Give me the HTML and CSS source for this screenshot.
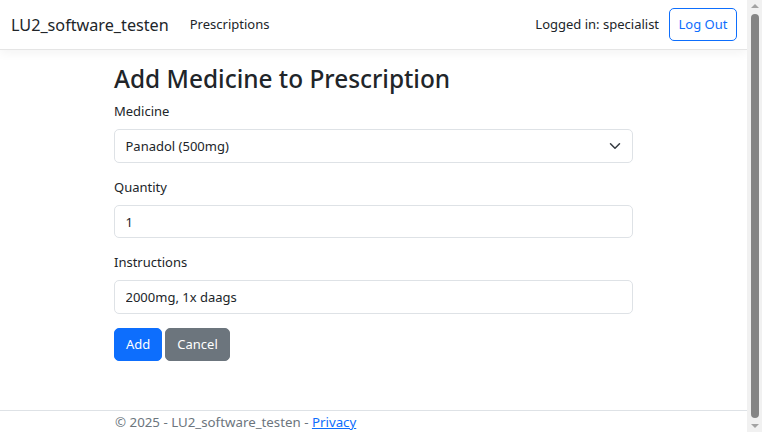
FILE: index.html
```html
<!DOCTYPE html>
<html lang="en">
<head>
<meta charset="utf-8">
<title>Add Medicine - LU2_software_testen</title>
<link rel="stylesheet" href="styles.css">
</head>
<body>
<div class="page">
  <header class="navbar">
    <a class="brand" href="#">LU2_software_testen</a>
    <nav class="nav-main">
      <a class="nav-link" href="#">Prescriptions</a>
    </nav>
    <div class="nav-user">
      <span class="user-text">Logged in: specialist</span>
      <button class="btn btn-outline" type="button">Log Out</button>
    </div>
  </header>

  <main class="main">
    <div class="container">
      <h2 class="title">Add Medicine to Prescription</h2>
      <form class="form">
        <div class="group">
          <label class="label" for="med">Medicine</label>
          <div class="select-wrap">
            <select id="med" class="control select">
              <option>Panadol (500mg)</option>
            </select>
            <svg class="chev" width="16" height="12" viewBox="0 0 16 16" aria-hidden="true"><path fill="none" stroke="#343a40" stroke-linecap="round" stroke-linejoin="round" stroke-width="2" d="m2 5 6 6 6-6"/></svg>
          </div>
        </div>
        <div class="group">
          <label class="label" for="qty">Quantity</label>
          <input id="qty" class="control" type="text" value="1">
        </div>
        <div class="group">
          <label class="label" for="ins">Instructions</label>
          <input id="ins" class="control" type="text" value="2000mg, 1x daags">
        </div>
        <div class="actions">
          <button class="btn btn-primary" type="button">Add</button>
          <a class="btn btn-secondary" href="#">Cancel</a>
        </div>
      </form>
    </div>
  </main>

  <footer class="footer">
    <div class="container">© 2025 - LU2_software_testen - <a class="footer-link" href="#">Privacy</a></div>
  </footer>
</div>
<div class="scrollbar">
  <div class="sb-arrow sb-up"></div>
  <div class="sb-thumb"></div>
  <div class="sb-arrow sb-down"></div>
</div>
</body>
</html>
```

FILE: styles.css
```css
* { box-sizing: border-box; }

html, body {
  margin: 0;
  height: 100%;
}

body {
  display: flex;
  font-family: "Noto Sans", "Open Sans", sans-serif;
  font-size: 13px;
  line-height: 21px;
  color: #212529;
  background: #fff;
  overflow: hidden;
}

.page {
  flex: 1;
  display: flex;
  flex-direction: column;
  height: 432px;
  overflow: hidden;
  min-width: 0;
}

.navbar {
  display: flex;
  align-items: center;
  padding: 7px 10px 7px 11px;
  border-bottom: 1px solid #e5e5e5;
  box-shadow: 0 3px 10px rgba(0, 0, 0, 0.05);
  margin-bottom: 14px;
  flex: none;
}

.brand {
  font-size: 16.2px;
  line-height: 24px;
  color: #212529;
  text-decoration: none;
  margin-right: 14px;
}

.nav-main {
  flex: 1;
  display: flex;
}

.nav-link {
  color: #212529;
  text-decoration: none;
  padding: 7px;
}

.nav-user {
  display: flex;
  align-items: center;
  gap: 10px;
}

.btn {
  display: inline-block;
  font-family: inherit;
  font-size: 13px;
  line-height: 21px;
  padding: 5.25px 11px;
  border: 1px solid transparent;
  border-radius: 5px;
  text-decoration: none;
  cursor: pointer;
  background: transparent;
}

.btn-outline {
  color: #0d6efd;
  border-color: #0d6efd;
  padding-left: 8.5px;
  padding-right: 8.5px;
}

.btn-primary {
  background: #0d6efd;
  border-color: #0d6efd;
  color: #fff;
}

.btn-secondary {
  background: #6c757d;
  border-color: #6c757d;
  color: #fff;
}

.main {
  flex: 1;
}

.container {
  width: 100%;
  max-width: 543px;
  padding: 0 12px;
  margin: 0 auto;
}

.title {
  margin: 0 0 7px;
  font-size: 24.4px;
  font-weight: 500;
  line-height: 30.4px;
}

.group {
  margin-bottom: 14px;
}

.label {
  display: inline-block;
  margin-bottom: 7px;
}

.control {
  display: block;
  width: 100%;
  font-family: inherit;
  font-size: 13px;
  line-height: 21px;
  color: #212529;
  padding: 5.25px 10.5px;
  border: 1px solid #dee2e6;
  border-radius: 5px;
  background: #fff;
  height: 33.5px;
}

.select-wrap {
  position: relative;
}

.select {
  appearance: none;
  -webkit-appearance: none;
  padding-right: 31.5px;
}

.chev {
  position: absolute;
  right: 10.5px;
  top: 50%;
  transform: translateY(-50%);
  pointer-events: none;
}

.actions {
  display: flex;
  gap: 3px;
}

.footer {
  flex: none;
  height: 22px;
  border-top: 1px solid #dee2e6;
  color: #6c757d;
  font-size: 13.3px;
  line-height: 21px;
  padding-top: 1px;
  white-space: nowrap;
}

.footer .container {
  padding-left: 13px;
}

.footer-link {
  color: #0d6efd;
}

.scrollbar {
  flex: none;
  width: 15px;
  height: 432px;
  background: #f1f1f1;
  display: flex;
  flex-direction: column;
  align-items: center;
  padding: 4px 0;
}

.sb-arrow {
  width: 0;
  height: 0;
  border-left: 4px solid transparent;
  border-right: 4px solid transparent;
  flex: none;
}

.sb-up {
  border-bottom: 4px solid #a3a3a3;
}

.sb-down {
  border-top: 4px solid #a3a3a3;
}

.sb-thumb {
  flex: 1;
  width: 8px;
  margin: 6px 0;
  border-radius: 4px;
  background: #858585;
}
```
